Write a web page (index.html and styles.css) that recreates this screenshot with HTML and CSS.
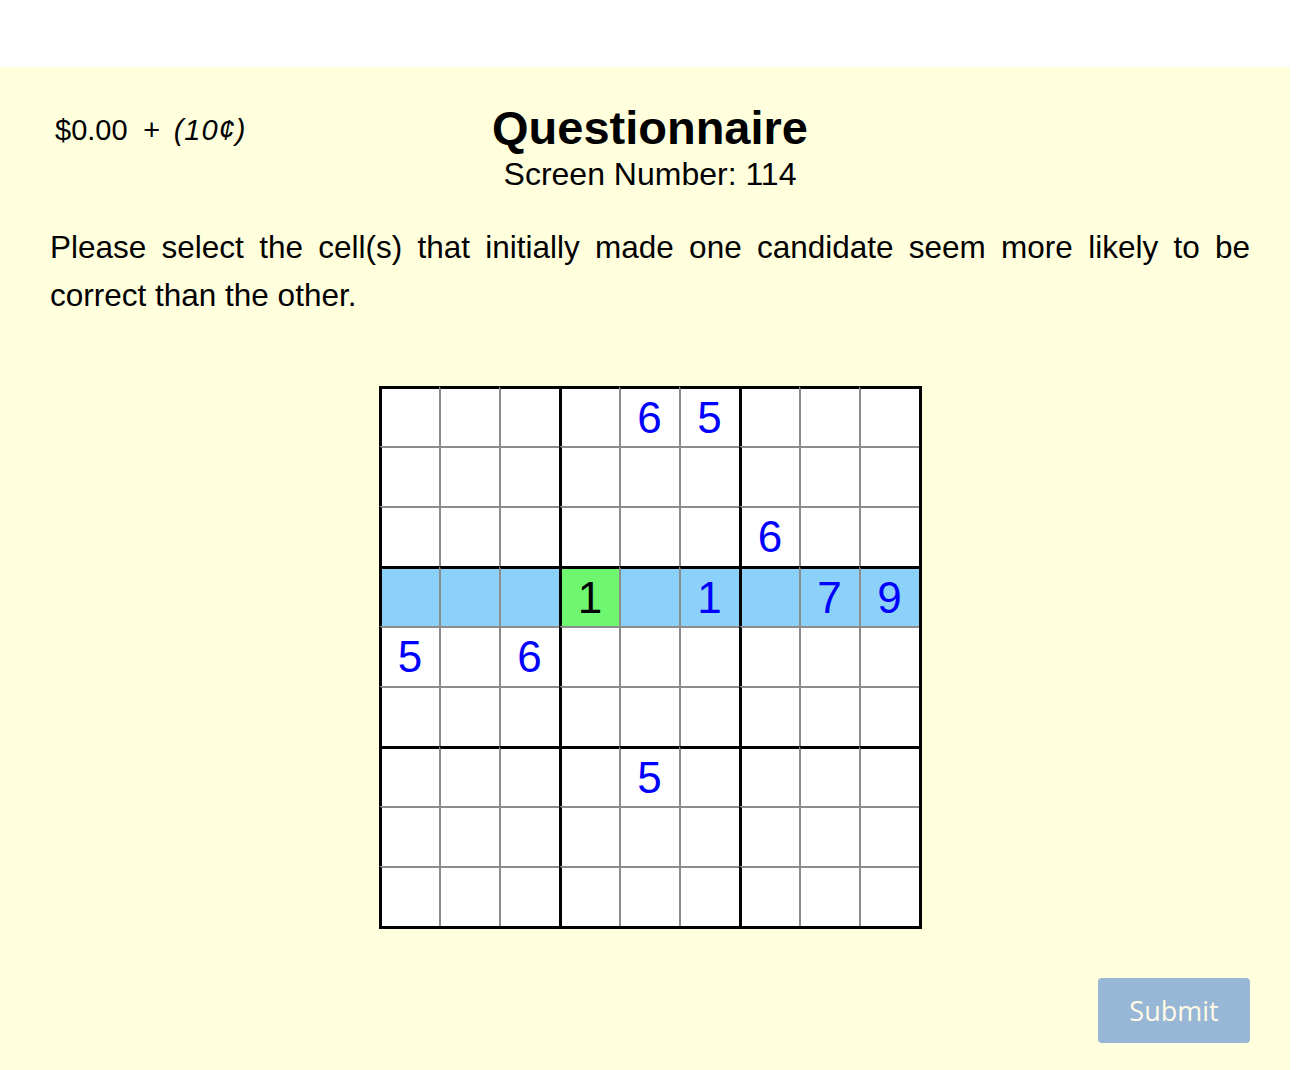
FILE: index.html
```html
<!DOCTYPE html>
<html>
<head>
<meta charset="utf-8">
<link rel="stylesheet" href="styles.css">
</head>
<body>
<div class="topbar"></div>
<div class="page">
  <div class="header">
    <div class="money">$0.00 <span class="bonus">+ (10¢)</span></div>
    <div class="titles">
      <h1 class="title">Questionnaire</h1>
      <div class="screen">Screen Number: 114</div>
    </div>
  </div>
  <p class="prompt">Please select the cell(s) that initially made one candidate seem more likely to be correct than the other.</p>
  <div class="board-wrap">
    <div class="board">
      <div class="cell"></div><div class="cell"></div><div class="cell"></div><div class="cell bl"></div><div class="cell">6</div><div class="cell">5</div><div class="cell bl"></div><div class="cell"></div><div class="cell"></div>
      <div class="cell"></div><div class="cell"></div><div class="cell"></div><div class="cell bl"></div><div class="cell"></div><div class="cell"></div><div class="cell bl"></div><div class="cell"></div><div class="cell"></div>
      <div class="cell"></div><div class="cell"></div><div class="cell"></div><div class="cell bl"></div><div class="cell"></div><div class="cell"></div><div class="cell bl">6</div><div class="cell"></div><div class="cell"></div>
      <div class="cell bt hl"></div><div class="cell bt hl"></div><div class="cell bt hl"></div><div class="cell bt bl sel">1</div><div class="cell bt hl"></div><div class="cell bt hl">1</div><div class="cell bt bl hl"></div><div class="cell bt hl">7</div><div class="cell bt hl">9</div>
      <div class="cell">5</div><div class="cell"></div><div class="cell">6</div><div class="cell bl"></div><div class="cell"></div><div class="cell"></div><div class="cell bl"></div><div class="cell"></div><div class="cell"></div>
      <div class="cell"></div><div class="cell"></div><div class="cell"></div><div class="cell bl"></div><div class="cell"></div><div class="cell"></div><div class="cell bl"></div><div class="cell"></div><div class="cell"></div>
      <div class="cell bt"></div><div class="cell bt"></div><div class="cell bt"></div><div class="cell bt bl"></div><div class="cell bt">5</div><div class="cell bt"></div><div class="cell bt bl"></div><div class="cell bt"></div><div class="cell bt"></div>
      <div class="cell"></div><div class="cell"></div><div class="cell"></div><div class="cell bl"></div><div class="cell"></div><div class="cell"></div><div class="cell bl"></div><div class="cell"></div><div class="cell"></div>
      <div class="cell"></div><div class="cell"></div><div class="cell"></div><div class="cell bl"></div><div class="cell"></div><div class="cell"></div><div class="cell bl"></div><div class="cell"></div><div class="cell"></div>
    </div>
  </div>
  <div class="actions">
    <button class="submit" type="button">Submit</button>
  </div>
</div>
</body>
</html>
```
FILE: styles.css
```css
html, body {
  margin: 0;
  padding: 0;
  background: #ffffff;
}
body {
  font-family: "Liberation Sans", Arial, sans-serif;
  color: #000;
}
.topbar {
  height: 67px;
}
.page {
  width: 1290px;
  height: 1003px;
  box-sizing: border-box;
  background: #ffffdd;
  padding: 0 40px 0 50px;
}
.header {
  position: relative;
  padding-top: 35px;
}
.money {
  position: absolute;
  left: 5px;
  top: 47px;
  font-size: 29px;
  line-height: 32px;
}
.bonus {
  font-style: italic;
  margin-left: 7px;
  word-spacing: 4px;
  letter-spacing: 1px;
}
.titles {
  text-align: center;
}
.title {
  margin: 0;
  font-size: 47px;
  font-weight: bold;
  line-height: 52px;
}
.screen {
  font-size: 32px;
  line-height: 40px;
}
.prompt {
  margin: 29px 0 0;
  font-size: 31.5px;
  line-height: 48px;
  text-align: justify;
}
.board-wrap {
  display: flex;
  justify-content: center;
  margin-top: 67px;
}
.board {
  display: grid;
  grid-template-columns: repeat(9, 60px);
  grid-template-rows: repeat(9, 60px);
  border-right: 3px solid #000;
  border-bottom: 3px solid #000;
  background: #fff;
}
.cell {
  box-sizing: border-box;
  border-left: 2px solid #8c8c8c;
  border-top: 2px solid #8c8c8c;
  display: flex;
  align-items: center;
  justify-content: center;
  font-size: 44px;
  color: #0000ff;
  background: #fff;
}
.cell:nth-child(9n+1) {
  border-left: 3px solid #000;
}
.cell:nth-child(-n+9) {
  border-top: 3px solid #000;
}
.cell.bl {
  border-left: 3px solid #000;
}
.cell.bt {
  border-top: 3px solid #000;
}
.cell.hl {
  background: #8bd1f9;
}
.cell.sel {
  background: #6ff76f;
  color: #000;
}
.actions {
  display: flex;
  justify-content: flex-end;
  margin-top: 49px;
}
.submit {
  width: 152px;
  height: 65px;
  border: none;
  border-radius: 4px;
  background: #98b6d6;
  color: #fffbe6;
  font-family: "Open Sans", sans-serif;
  font-size: 27px;
  padding: 0;
}
```
